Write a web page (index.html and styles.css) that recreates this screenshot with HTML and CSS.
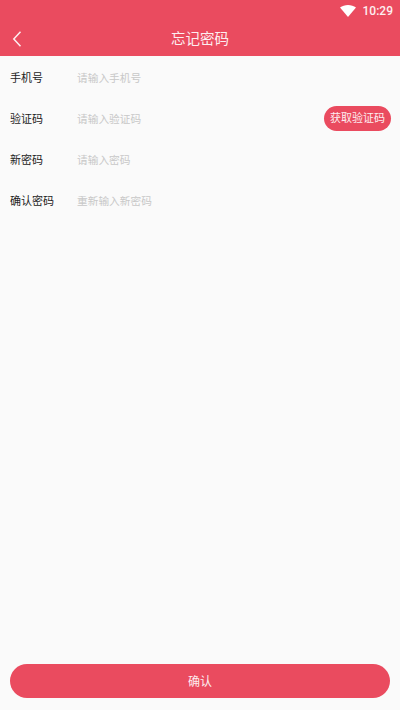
FILE: index.html
```html
<!DOCTYPE html>
<html lang="zh-CN">
<head>
  <meta charset="UTF-8">
  <meta name="viewport" content="width=device-width, initial-scale=1.0">
  <title>忘记密码</title>
  <link rel="stylesheet" href="styles.css">
</head>
<body>
  <div class="page">
    <div class="status-bar">
      <svg class="wifi" viewBox="0 0 16 12" width="16" height="12"><path d="M0 2.600C2.200 1 5 0 8 0s5.800 1 8 2.600L8 12z" fill="#fff"/></svg>
      <span class="time">10:29</span>
    </div>
    <div class="nav-bar">
      <svg class="back" viewBox="0 0 10 16" width="10" height="16"><path d="M8.500 .8 1.800 8l6.700 7.200" fill="none" stroke="#fdeef0" stroke-width="1.500"/></svg>
      <h1 class="title">忘记密码</h1>
    </div>
    <div class="form">
      <div class="row">
        <span class="label">手机号</span>
        <span class="placeholder">请输入手机号</span>
      </div>
      <div class="row">
        <span class="label">验证码</span>
        <span class="placeholder">请输入验证码</span>
        <button class="code-btn">获取验证码</button>
      </div>
      <div class="row">
        <span class="label">新密码</span>
        <span class="placeholder">请输入密码</span>
      </div>
      <div class="row">
        <span class="label">确认密码</span>
        <span class="placeholder">重新输入新密码</span>
      </div>
    </div>
    <div class="footer">
      <button class="confirm-btn">确认</button>
    </div>
  </div>
</body>
</html>
```

FILE: styles.css
```css
* {
  box-sizing: border-box;
}
html, body {
  margin: 0;
  height: 100%;
}
body {
  font-family: Roboto, "Noto Sans CJK SC", sans-serif;
  background-color: #fafafa;
}
.page {
  display: flex;
  flex-direction: column;
  height: 710px;
  overflow: hidden;
}
.status-bar {
  display: flex;
  align-items: center;
  justify-content: flex-end;
  gap: 7px;
  height: 21px;
  padding-right: 7px;
  background: #ea4b5f;
  color: #fdeef0;
}
.time {
  font-size: 12px;
  font-weight: 500;
}
.nav-bar {
  position: relative;
  display: flex;
  align-items: center;
  justify-content: center;
  height: 35px;
  padding-bottom: 2px;
  background: #ea4b5f;
}
.back {
  position: absolute;
  left: 12px;
  top: 10px;
}
.title {
  margin: 0;
  color: #fdeef0;
  font-size: 14.500px;
  font-weight: 400;
}
.form {
  flex: 1;
  padding-top: 1px;
}
.row {
  display: flex;
  align-items: center;
  height: 41px;
  padding: 0 9px 0 10px;
}
.label {
  width: 67px;
  padding-top: 2px;
  color: #1c1c1c;
  font-size: 11px;
  line-height: 14px;
}
.placeholder {
  flex: 1;
  padding-top: 2px;
  color: #c8c8c8;
  font-size: 10.700px;
  line-height: 14px;
}
.code-btn {
  width: 67px;
  height: 25px;
  padding: 0;
  border: none;
  border-radius: 13px;
  background: #ea4b5f;
  color: #fdeef0;
  font-family: inherit;
  font-size: 11px;
  line-height: 14px;
}
.footer {
  padding: 0 10px 12px;
}
.confirm-btn {
  display: block;
  width: 100%;
  height: 34px;
  padding: 0 0 2px;
  border: none;
  border-radius: 17px;
  background: #ea4b5f;
  color: #fdeef0;
  font-family: inherit;
  font-size: 12px;
}
```
